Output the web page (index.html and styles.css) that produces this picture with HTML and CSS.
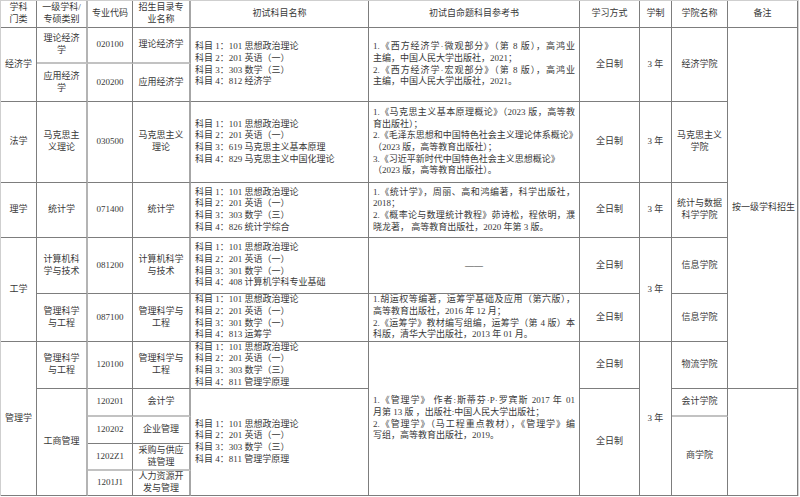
FILE: index.html
```html
<!DOCTYPE html>
<html lang="zh-CN">
<head>
<meta charset="utf-8">
<title>招生专业目录</title>
<link rel="stylesheet" href="styles.css">
</head>
<body>
<div class="tbl">
  <!-- header -->
  <div class="c">学科<br>门类</div>
  <div class="c lr">一级学科/<br>专硕类别</div>
  <div class="c">专业代码</div>
  <div class="c dr">招生目录专<br>业名称</div>
  <div class="c">初试科目名称</div>
  <div class="c">初试自命题科目参考书</div>
  <div class="c">学习方式</div>
  <div class="c">学制</div>
  <div class="c">学院名称</div>
  <div class="c">备注</div>

  <!-- 经济学 -->
  <div class="c r2">经济学</div>
  <div class="c lr lb">理论经济<br>学</div>
  <div class="c lb">020100</div>
  <div class="c dr lb">理论经济学</div>
  <div class="c l r2"><div class="lines">科目 1：101 思想政治理论<br>科目 2：201 英语（一）<br>科目 3：303 数学（三）<br>科目 4：812 经济学</div></div>
  <div class="c ref r2"><div class="lines">
    <div class="full">1.《西方经济学·微观部分》（第 8 版），高鸿业</div>
    <div>主编，中国人民大学出版社，2021；</div>
    <div class="full">2.《西方经济学·宏观部分》（第 8 版），高鸿业</div>
    <div>主编，中国人民大学出版社，2021。</div>
  </div></div>
  <div class="c r2">全日制</div>
  <div class="c r2">3 年</div>
  <div class="c r2">经济学院</div>
  <div class="c r7 note">按一级学科招生</div>
  <div class="c lr">应用经济<br>学</div>
  <div class="c">020200</div>
  <div class="c dr">应用经济学</div>

  <!-- 法学 -->
  <div class="c">法学</div>
  <div class="c lr">马克思主<br>义理论</div>
  <div class="c">030500</div>
  <div class="c dr">马克思主义<br>理论</div>
  <div class="c l"><div class="lines">科目 1：101 思想政治理论<br>科目 2：201 英语（一）<br>科目 3：619 马克思主义基本原理<br>科目 4：829 马克思主义中国化理论</div></div>
  <div class="c ref"><div class="lines">
    <div class="full">1.《马克思主义基本原理概论》（2023 版，高等教</div>
    <div>育出版社）；</div>
    <div class="full">2.《毛泽东思想和中国特色社会主义理论体系概论》</div>
    <div>（2023 版，高等教育出版社）；</div>
    <div>3.《习近平新时代中国特色社会主义思想概论》</div>
    <div>（2023 版，高等教育出版社）。</div>
  </div></div>
  <div class="c">全日制</div>
  <div class="c">3 年</div>
  <div class="c">马克思主义<br>学院</div>

  <!-- 理学 -->
  <div class="c">理学</div>
  <div class="c lr">统计学</div>
  <div class="c">071400</div>
  <div class="c dr">统计学</div>
  <div class="c l"><div class="lines">科目 1：101 思想政治理论<br>科目 2：201 英语（一）<br>科目 3：303 数学（三）<br>科目 4：826 统计学综合</div></div>
  <div class="c ref"><div class="lines">
    <div class="full">1.《统计学》，周丽、高和鸿编著，科学出版社，</div>
    <div>2018；</div>
    <div class="full">2.《概率论与数理统计教程》茆诗松，程依明，濮</div>
    <div>晓龙著， 高等教育出版社，2020 年第 3 版。</div>
  </div></div>
  <div class="c">全日制</div>
  <div class="c">3 年</div>
  <div class="c">统计与数据<br>科学学院</div>

  <!-- 工学 -->
  <div class="c r2">工学</div>
  <div class="c lr">计算机科<br>学与技术</div>
  <div class="c">081200</div>
  <div class="c dr">计算机科学<br>与技术</div>
  <div class="c l"><div class="lines">科目 1：101 思想政治理论<br>科目 2：201 英语（一）<br>科目 3：301 数学（一）<br>科目 4：408 计算机学科专业基础</div></div>
  <div class="c">——</div>
  <div class="c">全日制</div>
  <div class="c r2">3 年</div>
  <div class="c">信息学院</div>
  <div class="c lr">管理科学<br>与工程</div>
  <div class="c">087100</div>
  <div class="c dr">管理科学与<br>工程</div>
  <div class="c l"><div class="lines">科目 1：101 思想政治理论<br>科目 2：201 英语（一）<br>科目 3：301 数学（一）<br>科目 4：813 运筹学</div></div>
  <div class="c ref"><div class="lines">
    <div class="full">1.胡运权等编著，运筹学基础及应用（第六版），</div>
    <div>高等教育出版社，2016 年 12 月；</div>
    <div class="full">2.《运筹学》教材编写组编，运筹学（第 4 版）本</div>
    <div>科版，清华大学出版社，2013 年 01 月。</div>
  </div></div>
  <div class="c">全日制</div>
  <div class="c">信息学院</div>

  <!-- 管理学 -->
  <div class="c r5">管理学</div>
  <div class="c lr">管理科学<br>与工程</div>
  <div class="c">120100</div>
  <div class="c dr">管理科学与<br>工程</div>
  <div class="c l"><div class="lines">科目 1：101 思想政治理论<br>科目 2：201 英语（一）<br>科目 3：303 数学（三）<br>科目 4：811 管理学原理</div></div>
  <div class="c ref r5"><div class="lines">
    <div class="full">1.《管理学》 作者:斯蒂芬·P·罗宾斯 2017 年 01</div>
    <div>月第 13 版 ，出版社:中国人民大学出版社；</div>
    <div class="full">2.《管理学》（马工程重点教材），《管理学》编</div>
    <div>写组，高等教育出版社，2019。</div>
  </div></div>
  <div class="c">全日制</div>
  <div class="c r5">3 年</div>
  <div class="c">物流学院</div>

  <div class="c lr r4">工商管理</div>
  <div class="c lb">120201</div>
  <div class="c dr lb">会计学</div>
  <div class="c l r4"><div class="lines">科目 1：101 思想政治理论<br>科目 2：201 英语（一）<br>科目 3：303 数学（三）<br>科目 4：811 管理学原理</div></div>
  <div class="c r4">全日制</div>
  <div class="c lb">会计学院</div>
  <div class="c r4 note"></div>

  <div class="c">120202</div>
  <div class="c dr">企业管理</div>
  <div class="c r3">商学院</div>

  <div class="c lb">1202Z1</div>
  <div class="c dr lb">采购与供应<br>链管理</div>

  <div class="c">1201J1</div>
  <div class="c dr">人力资源开<br>发与管理</div>
</div>
</body>
</html>
```
FILE: styles.css
```css
html, body {
  margin: 0;
  padding: 0;
  background: #ffffff;
}

body {
  font-family: "Liberation Serif", "Noto Sans CJK SC", serif;
  font-size: 9px;
  line-height: 11.6px;
  color: #383838;
}

.tbl {
  display: grid;
  grid-template-columns: 36px 51px 45px 58px 178px 211px 60px 32px 56px 70px;
  grid-template-rows: 27px 36px 38px 81px 55px 56px 48px 47px 28px 27px 27px 25px;
  width: max-content;
  border-top: 1px solid #cfcfcf;
  border-left: 1px solid #cfcfcf;
  border-right: 1px solid #d4d4d4;
}

.c {
  box-sizing: border-box;
  border-right: 1px solid #7d7d7d;
  border-bottom: 1px solid #7d7d7d;
  display: flex;
  align-items: center;
  justify-content: center;
  text-align: center;
  white-space: nowrap;
  overflow: hidden;
  min-width: 0;
}

.lr {
  border-right: 2px solid #b4b4b4;
}

.dr {
  border-right: 2px solid #a6a6a6;
}

.lb {
  border-bottom: 2px solid #c2c2c2;
}

.r2 { grid-row: span 2; }
.r3 { grid-row: span 3; }
.r4 { grid-row: span 4; }
.r5 { grid-row: span 5; }
.r7 { grid-row: span 7; }

.l {
  justify-content: flex-start;
  text-align: left;
  padding-left: 4px;
}

.ref {
  justify-content: flex-start;
  text-align: left;
  padding: 0 4px 0 4px;
}

.lines {
  flex: 1;
  min-width: 0;
}

.full {
  text-align: justify;
  text-align-last: justify;
}

.note {
  padding-left: 2px;
}
```
